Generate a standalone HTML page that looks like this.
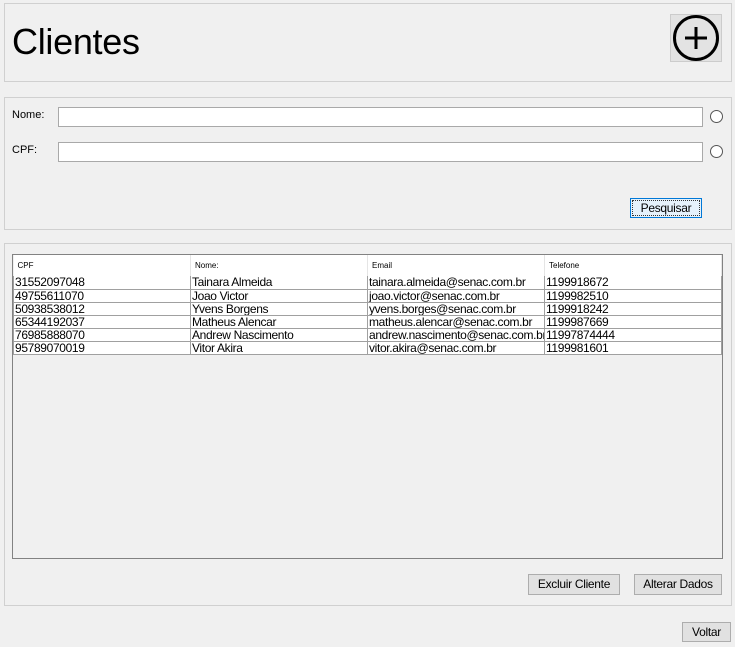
<!DOCTYPE html>
<html><head><style>
*{margin:0;padding:0;box-sizing:border-box}
body{width:735px;height:647px;background:#f0f0f0;font-family:"Liberation Sans",Arial,sans-serif;position:relative;overflow:hidden;font-size:12px;color:#000}
.p{position:absolute;border:1px solid #d0d0d0;background:#f0f0f0}
.a{position:absolute}
.in{position:absolute;background:#fff;border:1px solid #a9a9a9;height:20px}
.rad{position:absolute;width:13px;height:13px;border:1px solid #555;border-radius:50%;background:#fff}
.btn{position:absolute;background:#e1e1e1;border:1px solid #adadad;text-align:center;font-size:12px;line-height:19px;letter-spacing:-0.3px}
.tbl{position:absolute;left:12px;top:254px;width:711px;height:305px;border:1px solid #828282;background:#f0f0f0}
table{border-collapse:collapse;position:absolute;left:0;top:0;width:709px;table-layout:fixed}
td,th{font-size:12px;line-height:12px;height:13px;padding:0 0 0 1px;border:1px solid #a0a0a0;border-top:none;border-left:none;background:#fff;white-space:nowrap;overflow:hidden;text-align:left;font-weight:normal;letter-spacing:-0.35px}
th{height:21px;font-size:8px;vertical-align:middle;padding-left:4px;border-bottom:none;border-right:1px solid #e5e5e5;letter-spacing:0}
td{border-left:1px solid #a0a0a0}
</style></head><body>
<div class="p" style="left:4px;top:3px;width:728px;height:79px"></div>
<div class="a" style="left:12px;top:22px;font-size:36px;line-height:40px;letter-spacing:-0.3px">Clientes</div>
<div class="a" style="left:670px;top:14px;width:52px;height:48px;background:#e3e3e3;border:1px solid #ccc"></div>
<svg class="a" style="left:670px;top:14px" width="52" height="48" viewBox="0 0 52 48"><circle cx="26" cy="24" r="21.5" fill="none" stroke="#000" stroke-width="3"/><path d="M26 13V35M15 24H37" stroke="#000" stroke-width="3"/></svg>

<div class="p" style="left:4px;top:97px;width:728px;height:133px"></div>
<div class="a" style="left:12px;top:109px;font-size:11px">Nome:</div>
<div class="in" style="left:58px;top:107px;width:645px"></div>
<div class="rad" style="left:710px;top:110px"></div>
<div class="a" style="left:12px;top:144px;font-size:11px">CPF:</div>
<div class="in" style="left:58px;top:142px;width:645px"></div>
<div class="rad" style="left:710px;top:145px"></div>
<div class="btn" style="left:630px;top:198px;width:72px;height:20px;background:#e5f1fb;border:1px solid #0078d7;outline:1px dotted #333;outline-offset:-3px">Pesquisar</div>

<div class="p" style="left:4px;top:243px;width:728px;height:363px"></div>
<div class="tbl"><table>
<colgroup><col style="width:177px"><col style="width:177px"><col style="width:177px"><col></colgroup>
<tr><th>CPF</th><th>Nome:</th><th>Email</th><th>Telefone</th></tr>
<tr><td>31552097048</td><td>Tainara Almeida</td><td>tainara.almeida@senac.com.br</td><td>1199918672</td></tr>
<tr><td>49755611070</td><td>Joao Victor</td><td>joao.victor@senac.com.br</td><td>1199982510</td></tr>
<tr><td>50938538012</td><td>Yvens Borgens</td><td>yvens.borges@senac.com.br</td><td>1199918242</td></tr>
<tr><td>65344192037</td><td>Matheus Alencar</td><td>matheus.alencar@senac.com.br</td><td>1199987669</td></tr>
<tr><td>76985888070</td><td>Andrew Nascimento</td><td>andrew.nascimento@senac.com.br</td><td>11997874444</td></tr>
<tr><td>95789070019</td><td>Vitor Akira</td><td>vitor.akira@senac.com.br</td><td>1199981601</td></tr>
</table></div>
<div class="btn" style="left:528px;top:574px;width:92px;height:21px">Excluir Cliente</div>
<div class="btn" style="left:634px;top:574px;width:88px;height:21px">Alterar Dados</div>
<div class="btn" style="left:682px;top:622px;width:49px;height:20px">Voltar</div>
</body></html>
